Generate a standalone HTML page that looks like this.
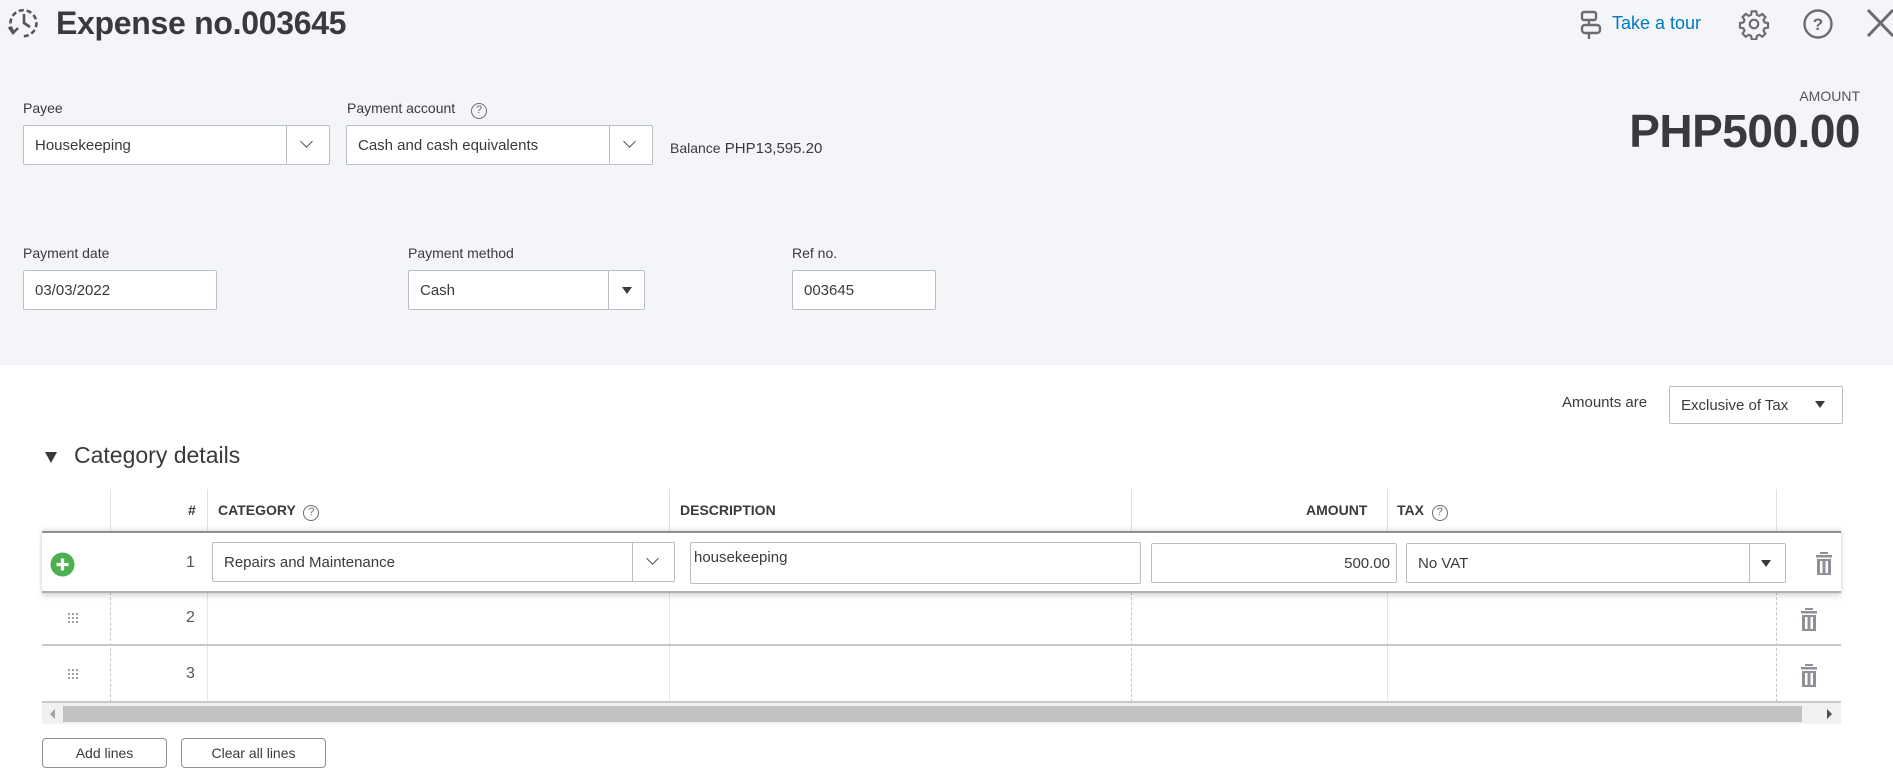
<!DOCTYPE html>
<html><head><meta charset="utf-8"><style>
*{box-sizing:border-box;margin:0;padding:0}
body{width:1893px;height:776px;overflow:hidden;background:#fff;font-family:"Liberation Sans",sans-serif;color:#393a3d;position:relative}
.a{position:absolute}
.hdr{left:0;top:0;width:1893px;height:365px;background:#f4f5f8}
.lbl{font-size:14px;color:#393a3d}
.inp{background:#fff;border:1px solid #babec5;border-radius:2px;font-size:15px;color:#393a3d;padding-left:11px;display:flex;align-items:center}
.div{position:absolute;top:0;bottom:0;width:1px;background:#babec5}
.chev{position:absolute;width:9px;height:9px;border-right:1.5px solid #555;border-bottom:1.5px solid #555;transform:rotate(45deg)}
.tri{position:absolute;width:0;height:0;border-left:5px solid transparent;border-right:5px solid transparent;border-top:7px solid #393a3d}
.th{font-size:14px;font-weight:bold;color:#393a3d;top:502px}
.vl{position:absolute;width:0;border-left:1px dashed #c6c6c6}
.q{display:inline-block;width:16px;height:16px;border:1.5px solid #6b6c72;border-radius:50%;font-size:11px;text-align:center;line-height:13px;color:#6b6c72;font-weight:normal}
.btn{border:1px solid #8d9096;border-radius:4px;background:#fff;font-size:14px;color:#393a3d;display:flex;align-items:center;justify-content:center;top:738px;height:30px}
.grip{position:absolute;width:12px;height:12px;background-image:radial-gradient(circle,#999 1px,transparent 1.2px);background-size:4px 4px}
</style></head><body>
<div class="a hdr"></div>

<svg class="a" style="left:7px;top:7px" width="34" height="32" viewBox="0 0 34 32" fill="none" stroke="#555" stroke-width="2.6">
<path d="M6 24 A13 13 0 1 1 14 29" stroke-dasharray="5 3"/>
<path d="M17 7 V16 L23 20"/>
<path d="M2 20 L6 26 L11 21"/>
</svg>
<div class="a" style="left:56px;top:5px;font-size:32px;font-weight:bold;color:#393a3d;letter-spacing:-0.3px">Expense no.003645</div>

<svg class="a" style="left:1579px;top:9px" width="26" height="32" viewBox="0 0 26 32" fill="none" stroke="#6b6c72" stroke-width="2.4">
<rect x="3" y="3" width="14" height="8" rx="2"/><rect x="3" y="16" width="18" height="8" rx="3"/><path d="M10 11 V16 M10 24 V30"/>
</svg>
<div class="a" style="left:1612px;top:13px;font-size:18px;color:#0077c5">Take a tour</div>
<svg class="a" style="left:1738px;top:8px" width="32" height="32" viewBox="0 0 24 24" fill="none" stroke="#6b6c72" stroke-width="1.6">
<circle cx="12" cy="12" r="3.2"/>
<path d="M10.3 2.5h3.4l.5 2.6 1.8.8 2.2-1.5 2.4 2.4-1.5 2.2.8 1.8 2.6.5v3.4l-2.6.5-.8 1.8 1.5 2.2-2.4 2.4-2.2-1.5-1.8.8-.5 2.6h-3.4l-.5-2.6-1.8-.8-2.2 1.5-2.4-2.4 1.5-2.2-.8-1.8-2.6-.5v-3.4l2.6-.5.8-1.8-1.5-2.2 2.4-2.4 2.2 1.5 1.8-.8z"/>
</svg>
<svg class="a" style="left:1802px;top:8px" width="32" height="32" viewBox="0 0 32 32"><circle cx="16" cy="16" r="13.5" fill="none" stroke="#6b6c72" stroke-width="2.4"/><text x="16" y="22" text-anchor="middle" font-family="Liberation Sans" font-size="17" font-weight="bold" fill="#6b6c72">?</text></svg>
<svg class="a" style="left:1866px;top:8px" width="27" height="30" viewBox="0 0 27 30" stroke="#6b6c72" stroke-width="3"><path d="M2 2 L27 28 M27 2 L2 28"/></svg>

<div class="a" style="right:33px;top:88px;font-size:14px;color:#555">AMOUNT</div>
<div class="a" style="right:33px;top:104px;font-size:46px;font-weight:bold;color:#393a3d;letter-spacing:-0.5px">PHP500.00</div>

<div class="a lbl" style="left:23px;top:100px">Payee</div>
<div class="a inp" style="left:23px;top:125px;width:307px;height:40px">Housekeeping<div class="div" style="left:262px"></div><div class="chev" style="left:278px;top:11px"></div></div>
<div class="a lbl" style="left:347px;top:100px">Payment account <span class="q" style="margin-left:12px">?</span></div>
<div class="a inp" style="left:346px;top:125px;width:307px;height:40px">Cash and cash equivalents<div class="div" style="left:262px"></div><div class="chev" style="left:278px;top:11px"></div></div>
<div class="a" style="left:670px;top:140px;font-size:15px"><b style="font-weight:normal;font-size:14px">Balance</b> PHP13,595.20</div>

<div class="a lbl" style="left:23px;top:245px">Payment date</div>
<div class="a inp" style="left:23px;top:270px;width:194px;height:40px">03/03/2022</div>
<div class="a lbl" style="left:408px;top:245px">Payment method</div>
<div class="a inp" style="left:408px;top:270px;width:237px;height:40px">Cash<div class="div" style="left:199px"></div><div class="tri" style="left:213px;top:16px"></div></div>
<div class="a lbl" style="left:792px;top:245px">Ref no.</div>
<div class="a inp" style="left:792px;top:270px;width:144px;height:40px">003645</div>

<div class="a" style="left:1562px;top:394px;font-size:15px">Amounts are</div>
<div class="a inp" style="left:1669px;top:386px;width:174px;height:38px;font-size:15px">Exclusive of Tax<div class="tri" style="left:145px;top:14px"></div></div>

<div class="tri" style="left:45px;top:452px;border-left-width:6px;border-right-width:6px;border-top-width:11px"></div>
<div class="a" style="left:74px;top:442px;font-size:23px;color:#393a3d">Category details</div>

<div class="a" style="left:110px;top:489px;width:1px;height:44px;background:#e0e0e0"></div>
<div class="a" style="left:207px;top:489px;width:1px;height:44px;background:#e0e0e0"></div>
<div class="a" style="left:669px;top:489px;width:1px;height:44px;background:#e0e0e0"></div>
<div class="a" style="left:1131px;top:489px;width:1px;height:44px;background:#e0e0e0"></div>
<div class="a" style="left:1387px;top:489px;width:1px;height:44px;background:#e0e0e0"></div>
<div class="a" style="left:1776px;top:489px;width:1px;height:44px;background:#e0e0e0"></div>
<div class="a th" style="left:188px">#</div>
<div class="a th" style="left:218px">CATEGORY <span class="q" style="margin-left:4px">?</span></div>
<div class="a th" style="left:680px">DESCRIPTION</div>
<div class="a th" style="left:1306px">AMOUNT</div>
<div class="a th" style="left:1397px">TAX <span class="q" style="margin-left:4px">?</span></div>

<div class="vl" style="left:110px;top:592px;height:110px"></div>
<div class="vl" style="left:207px;top:592px;height:110px;border-left:1px solid #e6e6e6"></div>
<div class="vl" style="left:669px;top:592px;height:110px;border-left:1px solid #e6e6e6"></div>
<div class="vl" style="left:1131px;top:592px;height:110px"></div>
<div class="vl" style="left:1387px;top:592px;height:110px;border-left:1px solid #e6e6e6"></div>
<div class="vl" style="left:1776px;top:592px;height:110px"></div>
<div class="a" style="left:42px;top:644px;width:1799px;height:2px;background:#c8c8c8"></div>
<div class="a" style="left:42px;top:701px;width:1799px;height:2px;background:#c8c8c8"></div>

<div class="a" style="left:42px;top:531px;width:1799px;height:62px;background:#fff;border-top:2px solid #8d9096;border-bottom:2px solid #b0b0b0;box-shadow:0 3px 5px rgba(0,0,0,0.15),0 -2px 4px rgba(0,0,0,0.1)"></div>
<svg class="a" style="left:50px;top:552px" width="25" height="25" viewBox="0 0 25 25"><circle cx="12.5" cy="12.5" r="12" style="fill:#4caf50"/><path d="M12.5 6.5v12M6.5 12.5h12" stroke="#fff" stroke-width="3.2"/></svg>
<div class="a" style="left:186px;top:554px;font-size:16px;color:#555">1</div>
<div class="a inp" style="left:212px;top:542px;width:463px;height:40px">Repairs and Maintenance<div class="div" style="left:419px"></div><div class="chev" style="left:435px;top:11px"></div></div>
<div class="a inp" style="left:690px;top:542px;width:451px;height:42px;align-items:flex-start;padding-top:6px;padding-left:3px">housekeeping</div>
<div class="a inp" style="left:1151px;top:543px;width:246px;height:40px;justify-content:flex-end;padding-right:6px">500.00</div>
<div class="a inp" style="left:1406px;top:543px;width:380px;height:40px">No VAT<div class="div" style="left:342px"></div><div class="tri" style="left:354px;top:16px"></div></div>

<svg class="a" style="left:1816px;top:552px" width="16" height="24" viewBox="0 0 16 24" fill="#8d9096"><rect x="4" y="0" width="8" height="2"/><rect x="0" y="3" width="16" height="2.5"/><path d="M1 7h14v16H1z M4 9v12h2.5V9z M9.5 9v12H12V9z" fill-rule="evenodd"/></svg>
<svg class="a" style="left:1801px;top:608px" width="16" height="24" viewBox="0 0 16 24" fill="#8d9096"><rect x="4" y="0" width="8" height="2"/><rect x="0" y="3" width="16" height="2.5"/><path d="M1 7h14v16H1z M4 9v12h2.5V9z M9.5 9v12H12V9z" fill-rule="evenodd"/></svg>
<svg class="a" style="left:1801px;top:664px" width="16" height="24" viewBox="0 0 16 24" fill="#8d9096"><rect x="4" y="0" width="8" height="2"/><rect x="0" y="3" width="16" height="2.5"/><path d="M1 7h14v16H1z M4 9v12h2.5V9z M9.5 9v12H12V9z" fill-rule="evenodd"/></svg>

<div class="grip" style="left:67px;top:612px"></div>
<div class="a" style="left:186px;top:609px;font-size:16px;color:#555">2</div>
<div class="grip" style="left:67px;top:668px"></div>
<div class="a" style="left:186px;top:665px;font-size:16px;color:#555">3</div>

<div class="a" style="left:42px;top:703px;width:1799px;height:21px;background:#f1f1f1"></div>
<div class="a" style="left:63px;top:706px;width:1739px;height:16px;background:#c1c1c1"></div>
<div class="a" style="left:50px;top:709px;width:0;height:0;border-top:5px solid transparent;border-bottom:5px solid transparent;border-right:5px solid #a3a3a3"></div>
<div class="a" style="left:1827px;top:709px;width:0;height:0;border-top:5px solid transparent;border-bottom:5px solid transparent;border-left:5px solid #505050"></div>

<div class="a btn" style="left:42px;width:125px">Add lines</div>
<div class="a btn" style="left:181px;width:145px">Clear all lines</div>
</body></html>
